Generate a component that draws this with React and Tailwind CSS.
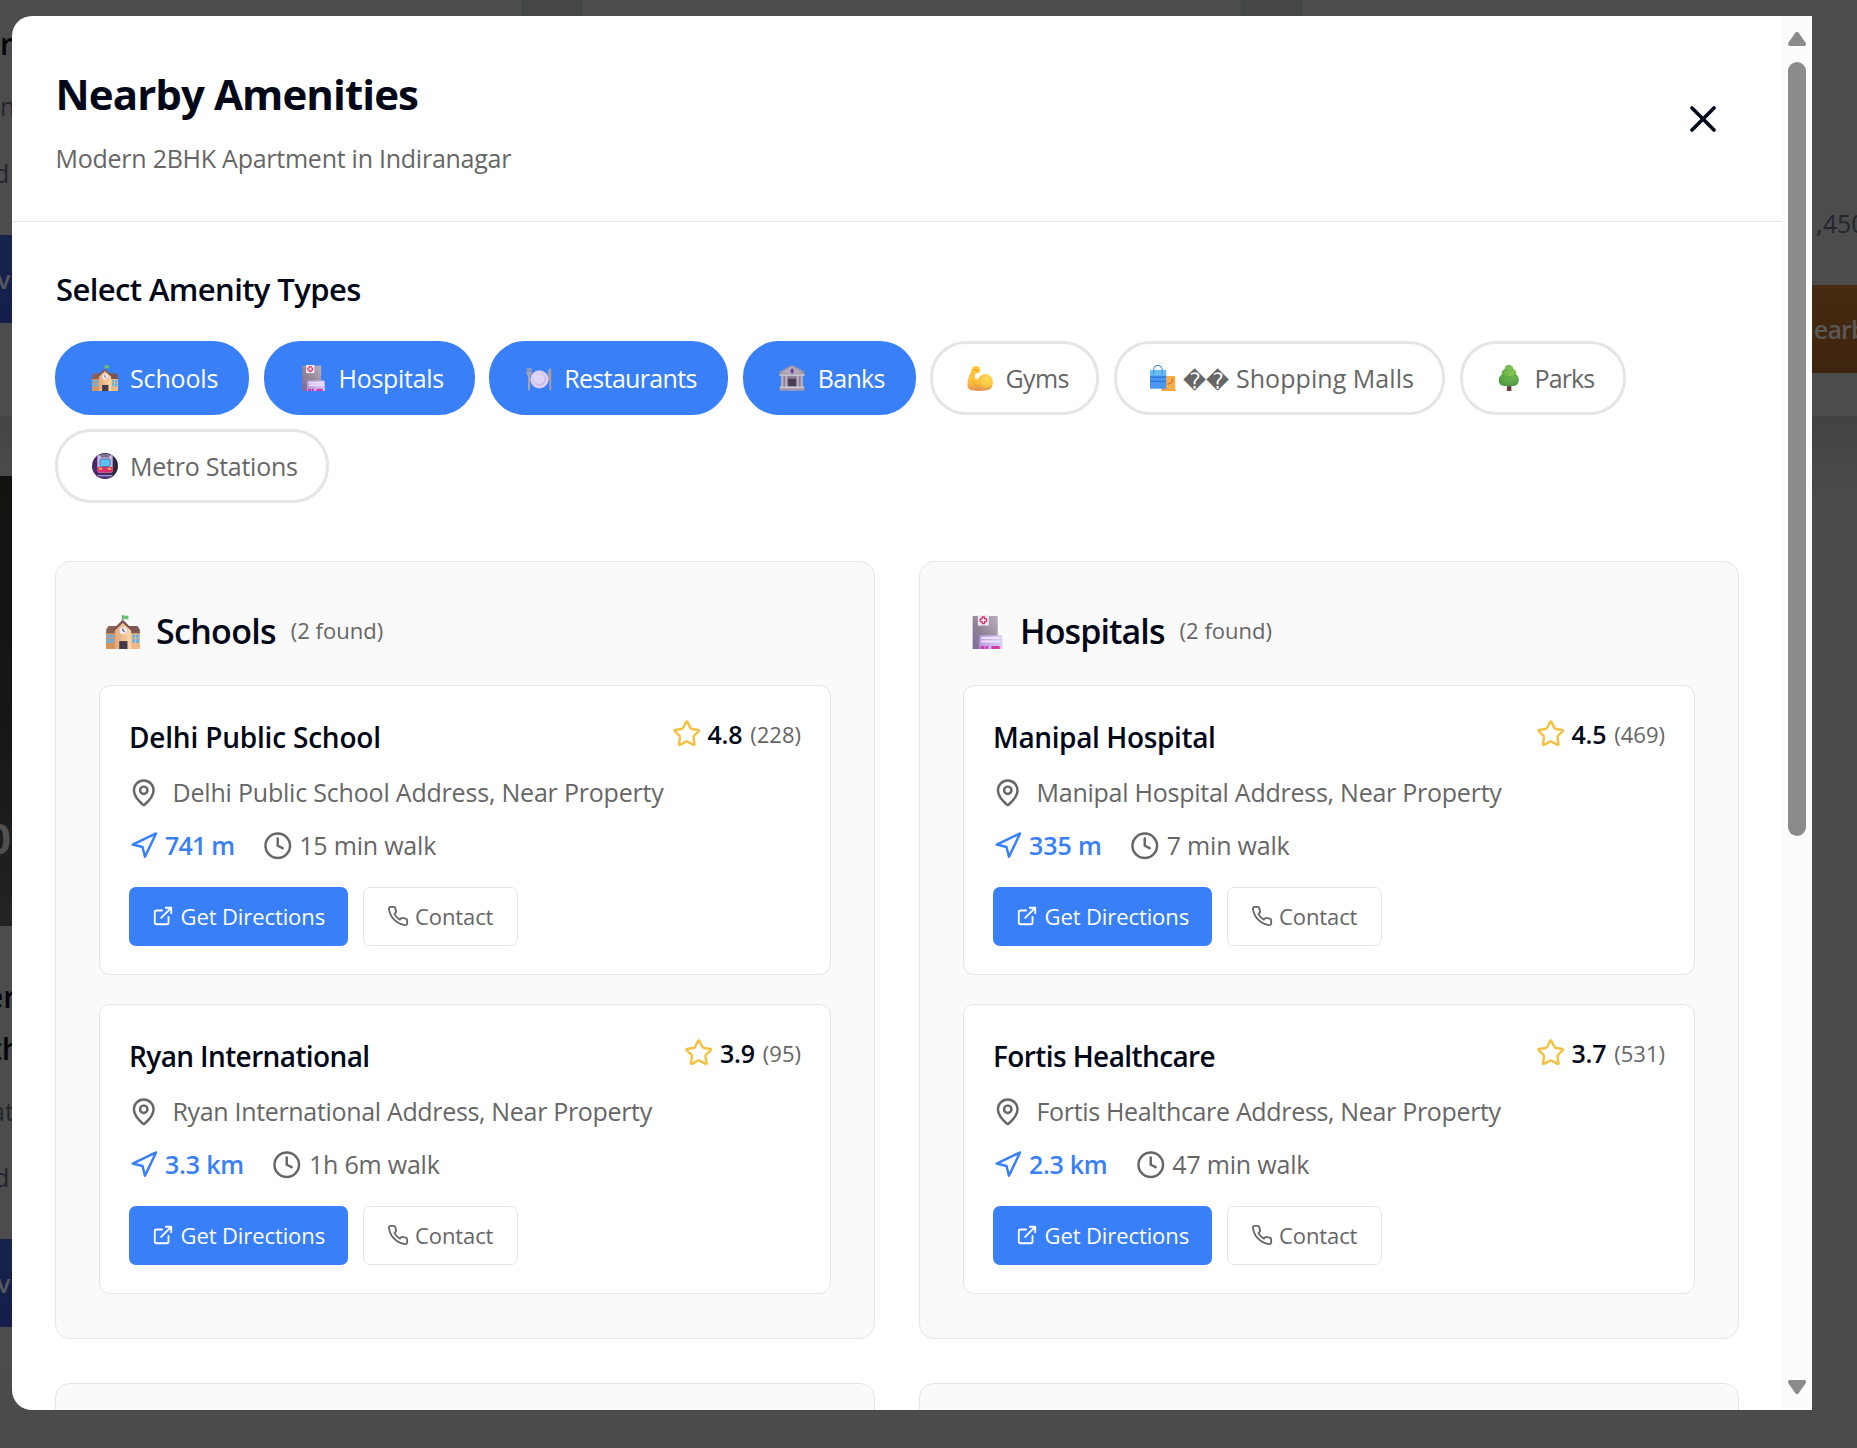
import React from "react";
import { MapPin, Navigation, Clock, Star, X } from "lucide-react";

function School({ className }) {
  return (
    <svg className={className} viewBox="0 0 103 103">
      <defs>
        <linearGradient id="school-wall" x1="0" x2="1">
          <stop offset="0" stopColor="#e0ab7b" />
          <stop offset="1" stopColor="#fbd7a8" />
        </linearGradient>
      </defs>
      <path d="M0 54h28v49H0z" fill="#d9935f" />
      <path d="M75 54h28v49H75z" fill="#f0b987" />
      <path d="M8 33h26v22H0l1-12z" fill="#8a6156" />
      <path d="M95 33H70v22h33l-1-12z" fill="#7d5650" />
      <path d="M51 20l25 25v58H27V45z" fill="url(#school-wall)" />
      <path d="M51 14l28 28v8L51 24 23 50v-8z" fill="#7d5650" />
      <path d="M48 0h4v18h-4z" fill="#8d8a96" />
      <path d="M51 2c6-2 12 2 18 0l-2 6 2 5c-6 2-12-2-18 0z" fill="#6cc26a" />
      <circle cx="52" cy="47" r="11" fill="#f3eef8" />
      <path d="M51 40v7l6 5" stroke="#5b4a6e" strokeWidth="3.5" fill="none" />
      <path d="M40 79h25v24H40z" fill="#433b4c" />
      <path d="M3 59h8v10H3zM14 59h9v10h-9zM3 72h8v13H3zM14 72h9v13h-9zM80 59h8v10h-8zM91 59h9v10h-9zM80 72h8v13h-8zM91 72h9v13h-9z" fill="#58b5f0" />
    </svg>
  );
}

function Hospital({ className }) {
  return (
    <svg className={className} viewBox="0 0 103 103">
      <defs>
        <linearGradient id="hospital-tower" x1="0" x2="1" y1="1" y2="0">
          <stop offset="0" stopColor="#80699c" />
          <stop offset=".45" stopColor="#8f8595" />
          <stop offset="1" stopColor="#b9b0c2" />
        </linearGradient>
        <linearGradient id="hospital-annex" x1="0" x2="1">
          <stop offset="0" stopColor="#b99ae6" />
          <stop offset="1" stopColor="#dccdf5" />
        </linearGradient>
      </defs>
      <path d="M12 3h68q4 0 4 4v96H8V7q0-4 4-4z" fill="url(#hospital-tower)" />
      <path d="M24 0h33v32H24z" fill="#f1e9fb" />
      <path d="M37 6h7v6h6v8h-6v6h-7v-6h-6v-8h6z" fill="#fff" stroke="#d9305f" strokeWidth="4" strokeLinejoin="round" />
      <path d="M33 61h60q5 0 5 5v37H28V66q0-5 5-5z" fill="url(#hospital-annex)" />
      <path d="M35 67h58v6H35zM35 77h58v6H35z" fill="#efe3ff" />
      <path d="M32 94h12v9H32zM47 94h8v9h-8zM65 94h25v9H65z" fill="#cf3bab" />
    </svg>
  );
}

function Plate({ className }) {
  return (
    <svg className={className} viewBox="0 0 103 103">
      <path d="M2 12h4v16h3V12h5v16h3V12h5v21q0 8-6 11v53q0 4-4 4t-4-4V44q-6-3-6-11z" fill="#a9a3ad" />
      <path d="M100 12v85q0 4-4 4t-4-4V62h-6V30q2-16 14-18z" fill="#a39ca9" />
      <circle cx="53" cy="57" r="36" fill="#dccff4" />
      <circle cx="54" cy="57" r="25" fill="#c9b8e8" />
      <circle cx="51" cy="54" r="22" fill="#dfd4f6" />
    </svg>
  );
}

function Bank({ className }) {
  return (
    <svg className={className} viewBox="0 0 103 103">
      <path d="M8 38h87v50H8z" fill="#8b8193" />
      <path d="M36 54h32v34H36z" fill="#4b3c56" />
      <path d="M8 38h10v50H8zM24 38h9v50h-9zM70 38h9v50h-9zM85 38h10v50H85z" fill="#b3aaba" />
      <path d="M44 4q8-6 16 0l40 22v14H3V26z" fill="#a098a8" />
      <path d="M50 9l40 22H12z" fill="#bab2c1" />
      <path d="M2 36h99v8H2z" fill="#c5bdcc" />
      <circle cx="52" cy="24" r="16" fill="#b3a9bd" />
      <path d="M52 12l8 12-8 13-8-13z" fill="#6c3f9d" />
      <path d="M3 85h97v17H3z" fill="#a39aab" />
      <path d="M3 85h97v7H3z" fill="#cdc5d4" />
    </svg>
  );
}

function Biceps({ className }) {
  return (
    <svg className={className} viewBox="0 0 103 103">
      <defs>
        <linearGradient id="arm" x1="0" x2="0" y1="0" y2="1">
          <stop offset="0" stopColor="#ffc93c" />
          <stop offset=".7" stopColor="#fcbd3c" />
          <stop offset="1" stopColor="#e08a55" />
        </linearGradient>
        <radialGradient id="arm-glow" cx=".6" cy=".35" r=".6">
          <stop offset="0" stopColor="#ffe05a" />
          <stop offset="1" stopColor="#fdbc3a" />
        </radialGradient>
      </defs>
      <path d="M24 7q14-7 25 1l3 14q-1 10-10 11l-9 2-2 17q6 6 13 4 9-19 29-18 26 2 29 31 0 22-15 29-32 8-66 2Q4 96 2 85q-2-26 15-60 0-14 7-18z" fill="url(#arm)" />
      <circle cx="73" cy="64" r="28" fill="url(#arm-glow)" />
      <path d="M27 20q10-4 15 2" stroke="#e29a2e" strokeWidth="4" fill="none" strokeLinecap="round" />
      <path d="M25 66q10 18 28 18" stroke="#ee9f35" strokeWidth="4" fill="none" strokeLinecap="round" />
    </svg>
  );
}

function Bags({ className }) {
  return (
    <svg className={className} viewBox="0 0 103 103">
      <path d="M46 44h50q4 0 4 4v55H46z" fill="#f8ae45" />
      <path d="M46 94h54v9H46z" fill="#f7a53e" />
      <path d="M91 50q2 22-22 26" stroke="#d8593b" strokeWidth="4" fill="none" />
      <path d="M15 22V16Q17 2 31 2t17 14v20M15 22v14" stroke="#3f87d8" strokeWidth="4" fill="none" />
      <path d="M0 20h64v74H0z" fill="#4897f5" />
      <path d="M0 20h64v22H0z" fill="#69bdf3" />
      <path d="M0 46h64v5H0zM0 62h64v5H0z" fill="#2f74d6" />
      <path d="M15 20v16M48 20v16" stroke="#3578cd" strokeWidth="3" />
    </svg>
  );
}

function Tree({ className }) {
  return (
    <svg className={className} viewBox="0 0 103 103">
      <defs>
        <radialGradient id="leaves" cx=".6" cy=".3" r=".7">
          <stop offset="0" stopColor="#8ccb54" />
          <stop offset="1" stopColor="#4f9b45" />
        </radialGradient>
      </defs>
      <path d="M43 76h18v27H43z" fill="#6b4142" />
      <path d="M51 0q17 1 18 17 14 5 11 21 12 8 10 23-2 21-20 22H33Q12 82 11 62q-1-16 12-23-3-17 11-22Q34 1 51 0z" fill="url(#leaves)" />
      <path d="M34 18q15 13 34 0M23 40q26 18 56 0" stroke="#4c9442" strokeWidth="4" fill="none" opacity=".6" />
    </svg>
  );
}

function Metro({ className }) {
  return (
    <svg className={className} viewBox="0 0 103 103">
      <defs>
        <linearGradient id="metro-bg" x1="0" x2="1">
          <stop offset="0" stopColor="#4b2671" />
          <stop offset="1" stopColor="#2a2733" />
        </linearGradient>
      </defs>
      <circle cx="51.5" cy="51.5" r="51.5" fill="url(#metro-bg)" />
      <path d="M28 84h47l6 8q-12 8-30 8T22 92z" fill="#4f3a86" />
      <path d="M22 88h59v4H22z" fill="#b6a6cf" />
      <path d="M26 9h51q5 0 5 6v55q0 8-8 8H29q-8 0-8-8V15q0-6 5-6z" fill="#cdb9ec" />
      <path d="M35 4h33v14H35z" fill="#7a7287" />
      <path d="M21 55h61v14q0 8-8 8H29q-8 0-8-8z" fill="#d92f71" />
      <rect x="32" y="24" width="40" height="30" rx="5" fill="#5dc3f7" stroke="#4a5976" strokeWidth="3" />
      <rect x="27" y="58" width="14" height="8" rx="3" fill="#fdb43c" />
      <rect x="62" y="58" width="14" height="8" rx="3" fill="#fdb43c" />
    </svg>
  );
}

function ExternalLink({ className }) {
  return (
    <svg className={className} viewBox="0 0 24 24" fill="none" stroke="currentColor" strokeWidth="2" strokeLinecap="round" strokeLinejoin="round">
      <path d="M18 13v6a2 2 0 0 1-2 2H5a2 2 0 0 1-2-2V8a2 2 0 0 1 2-2h6" />
      <path d="M15 3h6v6M10 14 21 3" />
    </svg>
  );
}

function Phone({ className }) {
  return (
    <svg className={className} viewBox="0 0 24 24" fill="none" stroke="currentColor" strokeWidth="2" strokeLinecap="round" strokeLinejoin="round">
      <path d="M22 16.92v3a2 2 0 0 1-2.18 2 19.79 19.79 0 0 1-8.63-3.07 19.5 19.5 0 0 1-6-6 19.79 19.79 0 0 1-3.07-8.67A2 2 0 0 1 4.11 2h3a2 2 0 0 1 2 1.72 12.84 12.84 0 0 0 .7 2.81 2 2 0 0 1-.45 2.11L8.09 9.91a16 16 0 0 0 6 6l1.27-1.27a2 2 0 0 1 2.11-.45 12.84 12.84 0 0 0 2.81.7A2 2 0 0 1 22 16.92z" />
    </svg>
  );
}

const types = [
  { label: "Schools", Icon: School, on: true, width: "w-[194px]", tracking: "tracking-[-0.15px]" },
  { label: "Hospitals", Icon: Hospital, on: true, width: "w-[211px]", tracking: "tracking-[-0.3px]" },
  { label: "Restaurants", Icon: Plate, on: true, width: "w-[239px]", tracking: "tracking-[-0.65px]" },
  { label: "Banks", Icon: Bank, on: true, width: "w-[173px]", tracking: "tracking-[-0.7px]" },
  { label: "Gyms", Icon: Biceps, width: "w-[169px]", tracking: "tracking-[-0.6px]" },
  { label: "Shopping Malls", Icon: Bags, width: "w-[331px]", broken: true, tracking: "tracking-[0.05px]" },
  { label: "Parks", Icon: Tree, width: "w-[166px]", tracking: "tracking-[-0.9px]" },
  { label: "Metro Stations", Icon: Metro, width: "w-[274px]", tracking: "tracking-[-0.25px]" },
];

const groups = [
  {
    title: "Schools",
    Icon: School,
    tracking: "tracking-[-0.7px]",
    places: [
      {
        name: "Delhi Public School",
        rating: "4.8",
        reviews: 228,
        distance: "741 m",
        walk: "15 min walk",
        nameTracking: "tracking-[-0.2px]",
        addressTracking: "tracking-[-0.2px]",
        distanceTracking: "tracking-[-0.8px]",
      },
      {
        name: "Ryan International",
        rating: "3.9",
        reviews: 95,
        distance: "3.3 km",
        walk: "1h 6m walk",
        nameTracking: "tracking-[-0.62px]",
        addressTracking: "tracking-[-0.33px]",
        distanceTracking: "tracking-[-0.2px]",
      },
    ],
  },
  {
    title: "Hospitals",
    Icon: Hospital,
    tracking: "tracking-[-0.9px]",
    places: [
      {
        name: "Manipal Hospital",
        rating: "4.5",
        reviews: 469,
        distance: "335 m",
        walk: "7 min walk",
        nameTracking: "tracking-[-0.38px]",
        addressTracking: "tracking-[-0.25px]",
        distanceTracking: "tracking-[-0.1px]",
      },
      {
        name: "Fortis Healthcare",
        rating: "3.7",
        reviews: 531,
        distance: "2.3 km",
        walk: "47 min walk",
        nameTracking: "tracking-[-0.6px]",
        addressTracking: "tracking-[-0.33px]",
        distanceTracking: "tracking-[-0.3px]",
      },
    ],
  },
];

function Chip({ label, Icon, on, width, broken, tracking }) {
  return (
    <button
      className={`flex h-[74px] shrink-0 items-center rounded-[36px] border-3 pl-[33.5px] text-[25px] ${width} ${
        on ? "border-[#387ff8] bg-[#387ff8] text-white" : "border-[#e5e5e5] bg-white text-[#666]"
      }`}
    >
      <Icon className="size-[26px] shrink-0" />
      {broken && (
        <span className="mt-[5px] ml-[5px] w-[49px] font-['DejaVu_Sans'] text-[22.5px] leading-[30px]">��</span>
      )}
      <span className={`pt-[2px] ${broken ? "ml-[5.5px]" : "ml-[12.5px]"} ${tracking}`}>{label}</span>
    </button>
  );
}

function Place({ name, rating, reviews, distance, walk, nameTracking, addressTracking, distanceTracking }) {
  return (
    <article className="h-[290px] rounded-[11px] border border-[#e5e5e5] bg-white p-[29px]">
      <div className="flex items-start justify-between">
        <h4 className={`text-[28px] leading-[44px] font-semibold text-[#020817] ${nameTracking}`}>{name}</h4>
        <div className="flex h-[38px] items-center">
          <Star className="size-[29.5px] text-[#f5c142]" />
          <span className="ml-[6px] pt-[2px] text-[25px] font-semibold tracking-[-0.2px] text-[#020817]">{rating}</span>
          <span className="ml-[8px] pt-px text-[22px] text-[#666]">({reviews})</span>
        </div>
      </div>
      <div className="mt-[14.5px] flex h-[38px] items-center gap-[14px] text-[25px] text-[#666]">
        <MapPin className="size-[29.5px]" />
        <span className={addressTracking}>{name} Address, Near Property</span>
      </div>
      <div className="mt-[15px] flex h-[38px] items-center text-[25px] text-[#666]">
        <Navigation className="size-[29.5px] text-[#387ff8]" />
        <span className={`ml-[6.5px] font-semibold text-[#387ff8] ${distanceTracking}`}>{distance}</span>
        <Clock className="ml-[28.5px] size-[29.5px]" />
        <span className="ml-[7px] tracking-[-0.2px]">{walk}</span>
      </div>
      <div className="mt-[22px] flex gap-[14.5px] text-[22px]">
        <button className="flex h-[59px] w-[219px] items-center gap-[6.5px] rounded-[7px] bg-[#387ff8] pl-[23px] tracking-[-0.1px] text-white">
          <ExternalLink className="size-[22px]" />
          Get Directions
        </button>
        <button className="flex h-[59px] w-[155px] items-center gap-[6.5px] rounded-[7px] border border-[#e5e5e5] bg-white pl-[23px] tracking-[-0.1px] text-[#666]">
          <Phone className="size-[22px]" />
          Contact
        </button>
      </div>
    </article>
  );
}

function Backdrop() {
  return (
    <div className="flex h-full w-full bg-[#4a4c4b] whitespace-nowrap text-[#22262d]">
      <div className="w-3 shrink-0 overflow-hidden text-[25px]">
        <div className="bg-[#4c4c4c]">
          <div className="h-[87px] text-[30px] leading-[87px] font-semibold text-[#03050a]">r</div>
          <div className="h-[39px] leading-[39px]">n</div>
          <div className="-ml-[6px] h-[93px] leading-[95px]">d</div>
          <div className="h-4" />
          <div className="h-[88px] bg-linear-to-b from-[#162347] to-[#151e4d] leading-[88px] font-semibold text-[#555861]">
            <span className="-ml-[3px]">v</span>
          </div>
          <div className="h-[93px]" />
        </div>
        <div className="h-[60px] bg-linear-to-b from-[#434444] to-[#4a4b4b]" />
        <div className="h-[450px] bg-linear-to-b from-[#13120f] via-[#151517] to-[#232323] pt-[332px]">
          <div className="-ml-[13px] text-[42px] leading-[60px] font-bold text-[#505050]">0</div>
        </div>
        <div className="bg-[#4c4c4c] pt-[45px]">
          <div className="-ml-[14px] text-[30px] leading-[51.5px] font-semibold text-[#03050a]">
            <div>er</div>
            <div className="pl-[4px]">th</div>
          </div>
          <div className="-ml-[9px] h-[75px] leading-[75px]">at</div>
          <div className="-ml-[6px] h-[57px] leading-[57px]">d</div>
          <div className="h-[33px]" />
          <div className="h-[88px] bg-linear-to-b from-[#162347] to-[#151e4d] leading-[88px] font-semibold text-[#555861]">
            <span className="-ml-[3px]">v</span>
          </div>
          <div className="h-[43px]" />
        </div>
      </div>
      <div className="flex h-[1410px] w-[1800px] shrink-0 bg-[#4c4c4c]">
        <div className="ml-[510px] w-[60px] border-x border-[#434545] bg-[#464848]" />
        <div className="ml-[659px] w-[61px] border-x border-[#434545] bg-[#464848]" />
      </div>
      <div className="w-[45px] shrink-0 overflow-hidden text-[25px]">
        <div className="h-[416px] bg-[#4c4c4c] pt-[203px]">
          <div className="-ml-[10px] h-[41px] leading-[41px]">1,450</div>
          <div className="mt-[41px] h-[88px] bg-linear-to-b from-[#472b12] to-[#3d240e] leading-[88px] font-semibold tracking-[-0.8px] text-[#5c5854]">
            <span className="-ml-[17px]">Nearby</span>
          </div>
        </div>
        <div className="h-[80px] bg-linear-to-b from-[#434343] to-[#484a4c]" />
      </div>
    </div>
  );
}

export default function App() {
  return (
    <div className="relative h-[1448px] w-[1857px] overflow-hidden font-['Open_Sans',sans-serif]">
      <Backdrop />
      <div className="absolute top-4 left-3 flex h-[1394px] w-[1800px] overflow-hidden rounded-l-[20px] bg-white whitespace-nowrap">
        <main className="w-[1770px] shrink-0">
          <header className="flex h-[206px] items-center justify-between border-b border-[#e5e5e5] px-[43.5px]">
            <div>
              <h2 className="text-[42px] leading-[67px] font-bold tracking-[-0.9px] text-[#020817]">Nearby Amenities</h2>
              <p className="mt-[12px] text-[25px] leading-[38px] tracking-[-0.25px] text-[#666]">
                Modern 2BHK Apartment in Indiranagar
              </p>
            </div>
            <button className="flex size-[71px] items-center justify-center text-[#020817]">
              <X className="size-[44px]" />
            </button>
          </header>
          <section className="px-[43px] pt-[45px]">
            <h3 className="pl-px text-[31px] leading-[44px] font-semibold tracking-[-0.6px] text-[#020817]">Select Amenity Types</h3>
            <div className="mt-[30px] flex flex-wrap gap-x-[14.6px] gap-y-[14px]">
              {types.map((t) => (
                <Chip key={t.label} {...t} />
              ))}
            </div>
            <div className="mt-[58px] grid w-[1684px] grid-cols-2 gap-[44px]">
              {groups.map(({ title, Icon, places, tracking }) => (
                <section key={title} className="h-[778px] rounded-[15px] border border-[#e5e5e5] bg-[#fafafa] px-[43px] pt-[44px]">
                  <div className="flex h-[50px] items-center pl-[7px]">
                    <Icon className="mt-[2px] size-[34px]" />
                    <h3 className={`ml-[16px] text-[34px] leading-[50px] font-semibold text-[#020817] ${tracking}`}>{title}</h3>
                    <span className="ml-[15px] pb-[2px] text-[22px] text-[#666]">(2 found)</span>
                  </div>
                  <div className="mt-[29px] flex flex-col gap-[29px]">
                    {places.map((p) => (
                      <Place key={p.name} {...p} />
                    ))}
                  </div>
                </section>
              ))}
              <section className="h-[200px] rounded-[15px] border border-[#e5e5e5] bg-[#fafafa]" />
              <section className="h-[200px] rounded-[15px] border border-[#e5e5e5] bg-[#fafafa]" />
            </div>
          </section>
        </main>
        <aside className="flex w-[30px] shrink-0 flex-col items-center bg-[#fcfcfc] pt-4 pb-4 text-[#8b8b8b]">
          <svg className="h-[14px] w-[18px]" viewBox="0 0 18 14">
            <path d="M9 2 16 12H2z" fill="currentColor" stroke="currentColor" strokeWidth="4" strokeLinejoin="round" />
          </svg>
          <div className="mt-4 h-[774px] w-[18px] rounded-full bg-[#8b8b8b]" />
          <svg className="mt-auto h-[14px] w-[18px]" viewBox="0 0 18 14">
            <path d="M9 12 16 2H2z" fill="currentColor" stroke="currentColor" strokeWidth="4" strokeLinejoin="round" />
          </svg>
        </aside>
      </div>
    </div>
  );
}
